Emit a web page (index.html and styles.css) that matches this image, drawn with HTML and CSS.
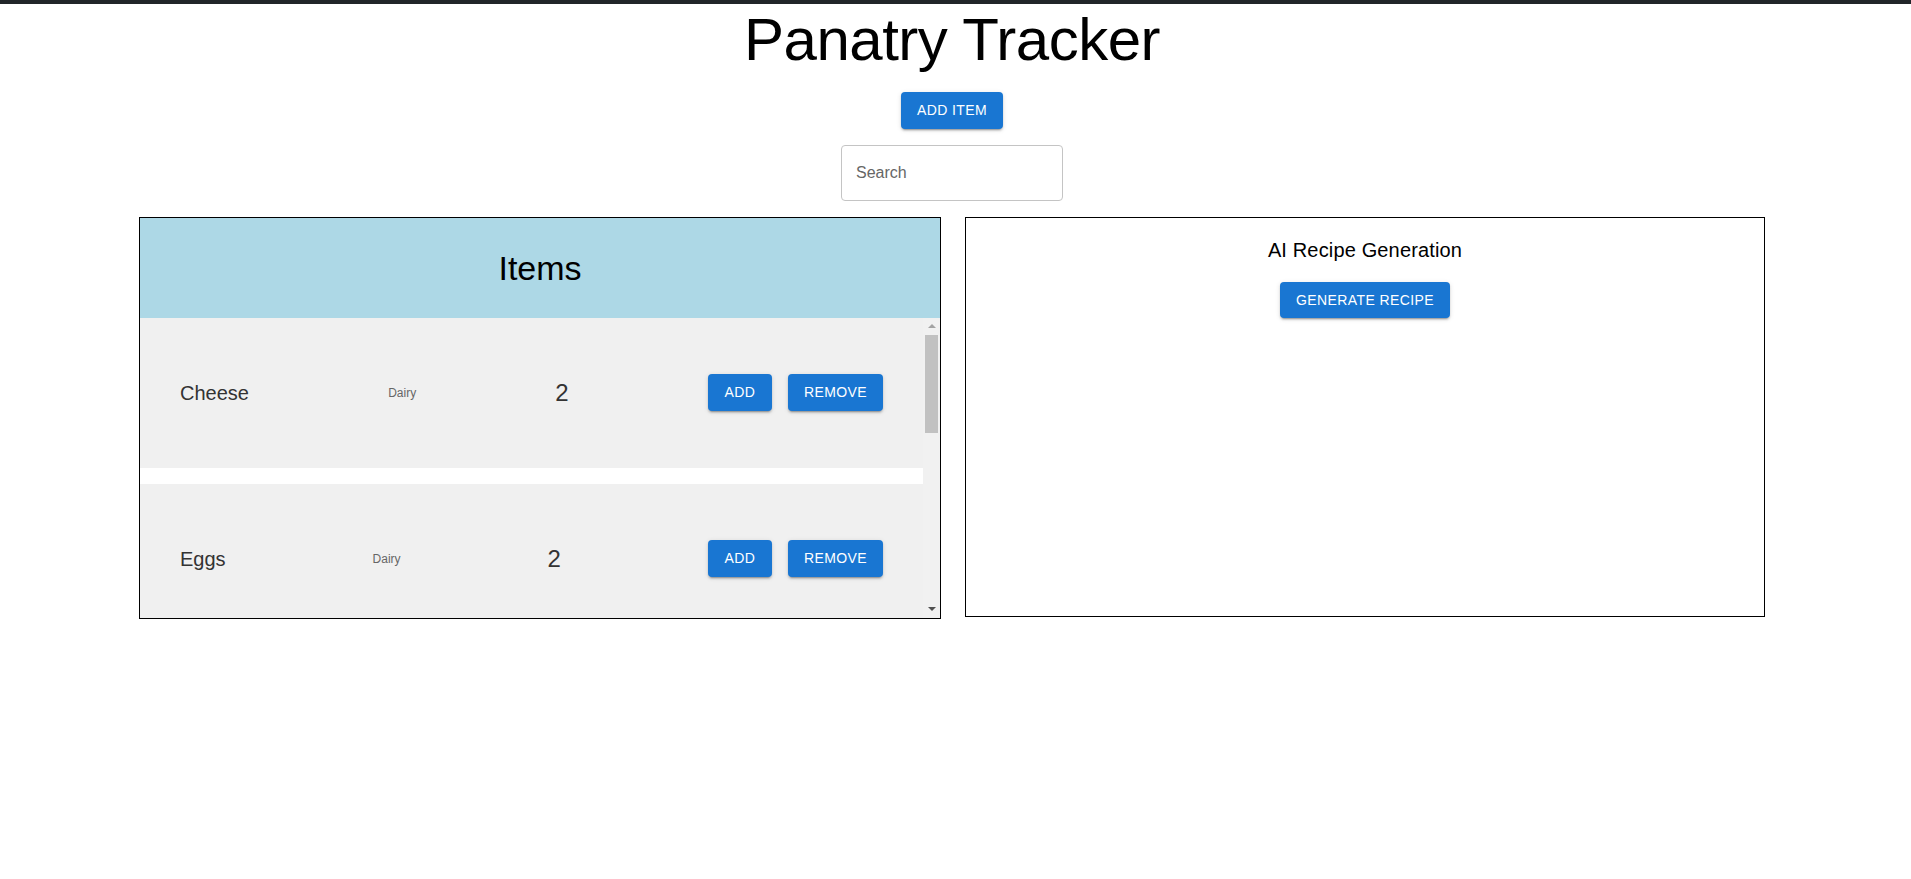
FILE: index.html
```html
<!DOCTYPE html>
<html lang="en">
<head>
<meta charset="utf-8">
<title>Panatry Tracker</title>
<link rel="stylesheet" href="styles.css">
</head>
<body>
<div class="topbar"></div>
<main class="page">
  <h1 class="title">Panatry Tracker</h1>
  <button class="btn">Add Item</button>
  <div class="search">
    <input class="search-input" type="text" placeholder="Search">
  </div>
  <div class="panels">
    <section class="items">
      <div class="items-header">
        <h2 class="items-title">Items</h2>
      </div>
      <div class="items-body">
        <div class="list">
          <div class="row">
            <span class="name">Cheese</span>
            <span class="category">Dairy</span>
            <span class="qty">2</span>
            <div class="actions">
              <button class="btn">Add</button>
              <button class="btn">Remove</button>
            </div>
          </div>
          <div class="row">
            <span class="name">Eggs</span>
            <span class="category">Dairy</span>
            <span class="qty">2</span>
            <div class="actions">
              <button class="btn">Add</button>
              <button class="btn">Remove</button>
            </div>
          </div>
        </div>
        <div class="scrollbar" aria-hidden="true">
          <div class="sb-btn"><span class="sb-arrow-up"></span></div>
          <div class="sb-thumb"></div>
          <div class="sb-track"></div>
          <div class="sb-btn"><span class="sb-arrow-down"></span></div>
        </div>
      </div>
    </section>
    <section class="recipe">
      <h2 class="recipe-title">AI Recipe Generation</h2>
      <button class="btn">Generate Recipe</button>
    </section>
  </div>
</main>
</body>
</html>
```

FILE: styles.css
```css
* {
  box-sizing: border-box;
}

html, body {
  margin: 0;
  padding: 0;
  background: #ffffff;
}

body {
  font-family: "Liberation Sans", Arial, Helvetica, sans-serif;
  color: #000;
}

.topbar {
  height: 4px;
  background: #212529;
}

.page {
  display: flex;
  flex-direction: column;
  align-items: center;
  gap: 16px;
  padding-right: 7px;
}

.title {
  margin: 0;
  font-size: 60px;
  font-weight: 400;
  line-height: 72px;
  letter-spacing: -0.5px;
  color: #000;
}

.btn {
  font-family: "Liberation Sans", Arial, Helvetica, sans-serif;
  font-size: 14px;
  font-weight: 400;
  line-height: 24.5px;
  letter-spacing: 0.4px;
  text-transform: uppercase;
  color: #fff;
  background: #1976d2;
  border: none;
  border-radius: 4px;
  padding: 6px 16px;
  min-width: 64px;
  box-shadow: 0px 3px 1px -2px rgba(0,0,0,0.2), 0px 2px 2px 0px rgba(0,0,0,0.14), 0px 1px 5px 0px rgba(0,0,0,0.12);
  cursor: pointer;
}

.search {
  display: flex;
}

.search-input {
  width: 222px;
  height: 56px;
  border: 1px solid #c4c4c4;
  border-radius: 4px;
  padding: 0 14px;
  font-family: "Liberation Sans", Arial, Helvetica, sans-serif;
  font-size: 16px;
  color: #222;
  outline: none;
}

.search-input::placeholder {
  color: #666;
  opacity: 1;
}

.panels {
  display: flex;
  gap: 24px;
  align-items: flex-start;
}

.items {
  box-sizing: content-box;
  width: 800px;
  height: 400px;
  border: 1px solid #000;
  display: flex;
  flex-direction: column;
}

.items-header {
  height: 100px;
  background: #add8e6;
  display: flex;
  align-items: center;
  justify-content: center;
}

.items-title {
  margin: 0;
  font-size: 34px;
  font-weight: 400;
  line-height: 42px;
  color: #000;
}

.items-body {
  height: 300px;
  display: flex;
}

.list {
  flex: 1;
  min-width: 0;
  overflow: hidden;
  display: flex;
  flex-direction: column;
  gap: 16px;
  background: #fff;
}

.row {
  flex: 0 0 auto;
  width: 100%;
  min-height: 150px;
  display: flex;
  justify-content: space-between;
  align-items: center;
  background: #f0f0f0;
  padding: 0 40px;
}

.name {
  font-size: 20px;
  line-height: 32px;
  color: #333;
}

.category {
  font-size: 12px;
  line-height: 20px;
  color: #666;
}

.qty {
  font-size: 24px;
  line-height: 32px;
  color: #333;
}

.actions {
  display: flex;
  gap: 16px;
}

.scrollbar {
  width: 17px;
  flex: 0 0 17px;
  background: #f1f1f1;
  display: flex;
  flex-direction: column;
}

.sb-btn {
  height: 17px;
  flex: 0 0 17px;
  display: flex;
  align-items: center;
  justify-content: center;
}

.sb-arrow-up {
  width: 0;
  height: 0;
  border-left: 4px solid transparent;
  border-right: 4px solid transparent;
  border-bottom: 4px solid #a3a3a3;
}

.sb-arrow-down {
  width: 0;
  height: 0;
  border-left: 4px solid transparent;
  border-right: 4px solid transparent;
  border-top: 4px solid #505050;
}

.sb-thumb {
  height: 98px;
  flex: 0 0 98px;
  margin: 0 2px;
  background: #c1c1c1;
}

.sb-track {
  flex: 1;
}

.recipe {
  width: 800px;
  height: 400px;
  border: 1px solid #000;
  padding: 16px;
  display: flex;
  flex-direction: column;
  align-items: center;
  gap: 16px;
}

.recipe-title {
  margin: 0;
  font-size: 20px;
  font-weight: 400;
  line-height: 32px;
  letter-spacing: 0.15px;
  color: #000;
}
```
